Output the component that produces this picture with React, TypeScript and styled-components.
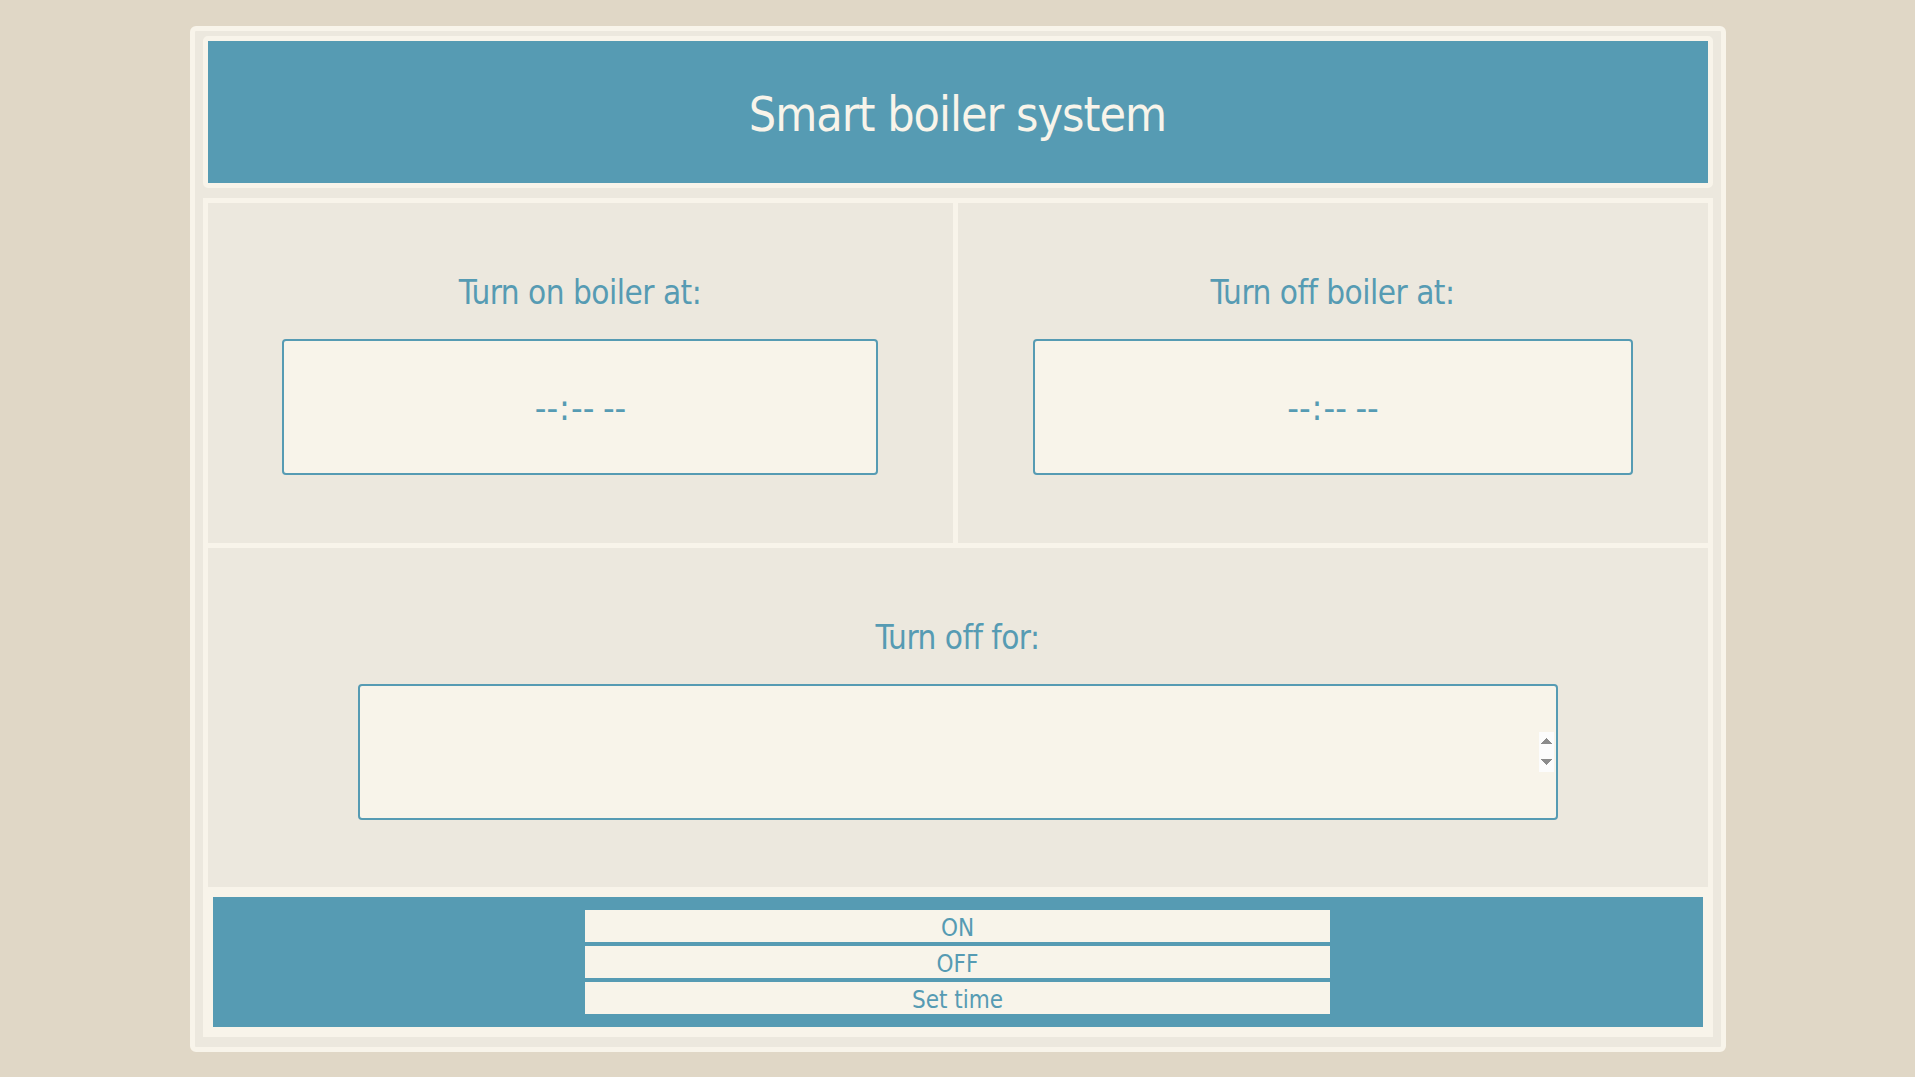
import React, {useState} from 'react';
import styled, {createGlobalStyle} from 'styled-components';

const BLUE = '#569bb3';
const LIGHT = '#f8f4ea';
const PANEL = '#ece8de';
const PAGE = '#e0d7c6';
const FONT = `"DejaVu Sans Condensed", "DejaVu Sans", Tahoma, sans-serif`;

const GlobalStyle = createGlobalStyle`
	html, body {
		margin: 0;
		padding: 0;
		background-color: ${PAGE};
		font-family: ${FONT};
	}
`;

const Frame = styled.div`
	width: 1536px;
	box-sizing: border-box;
	margin: 26px auto 0;
	padding: 5px 8px 10px;
	border: 5px solid ${LIGHT};
	border-radius: 6px;
	background-color: ${PANEL};
	display: flex;
	flex-direction: column;
	gap: 10px;
`;

const Header = styled.header`
	height: 152px;
	box-sizing: border-box;
	border: 5px solid ${LIGHT};
	border-radius: 5px;
	background-color: ${BLUE};
	display: flex;
	align-items: center;
	justify-content: center;
`;

const Title = styled.h1`
	margin: 3px 0 0;
	font-weight: normal;
	font-size: 48px;
	letter-spacing: -1px;
	color: ${LIGHT};
`;

const Board = styled.main`
	background-color: ${LIGHT};
	padding: 5px;
	display: grid;
	grid-template-columns: 745fr 750fr;
	gap: 5px;
`;

const Cell = styled.section<{ $wide?: boolean }>`
	grid-column: ${({$wide}) => ($wide ? '1 / span 2' : 'auto')};
	height: ${({$wide}) => ($wide ? '339px' : '340px')};
	box-sizing: border-box;
	padding-top: 71px;
	background-color: ${PANEL};
	display: flex;
	flex-direction: column;
	align-items: center;
`;

const Label = styled.label`
	display: block;
	height: 38px;
	line-height: 38px;
	margin-bottom: 27px;
	font-size: 33px;
	letter-spacing: -0.5px;
	color: ${BLUE};
`;

const Field = styled.input`
	width: 80%;
	height: 136px;
	box-sizing: border-box;
	border: 2px solid ${BLUE};
	border-radius: 4px;
	background-color: ${LIGHT};
	color: ${BLUE};
	font-family: ${FONT};
	font-size: 36px;
	text-align: center;
	outline: none;

	&::-webkit-calendar-picker-indicator {
		display: none;
	}

	&::-webkit-datetime-edit {
		justify-content: center;
	}

	&::-webkit-inner-spin-button {
		opacity: 1;
	}
`;

const Controls = styled.footer`
	grid-column: 1 / span 2;
	border: 5px solid ${LIGHT};
	border-radius: 5px;
	background-color: ${BLUE};
	padding: 13px 0;
	display: flex;
	flex-direction: column;
	align-items: center;
	gap: 4px;
`;

const Button = styled.button`
	width: 50%;
	height: 32px;
	border: none;
	padding: 3px 0 0;
	background-color: ${LIGHT};
	color: ${BLUE};
	font-family: ${FONT};
	font-size: 24px;
	cursor: pointer;
`;

export default function App() {
	const [onAt, setOnAt] = useState('');
	const [offAt, setOffAt] = useState('');
	const [offFor, setOffFor] = useState('');

	return (
		<>
			<GlobalStyle/>
			<Frame>
				<Header>
					<Title>Smart boiler system</Title>
				</Header>
				<Board>
					<Cell>
						<Label htmlFor="on-at">Turn on boiler at:</Label>
						<Field id="on-at" type="time" value={onAt} onChange={e => setOnAt(e.target.value)}/>
					</Cell>
					<Cell>
						<Label htmlFor="off-at">Turn off boiler at:</Label>
						<Field id="off-at" type="time" value={offAt} onChange={e => setOffAt(e.target.value)}/>
					</Cell>
					<Cell $wide>
						<Label htmlFor="off-for">Turn off for:</Label>
						<Field id="off-for" type="number" value={offFor} onChange={e => setOffFor(e.target.value)}/>
					</Cell>
					<Controls>
						<Button>ON</Button>
						<Button>OFF</Button>
						<Button>Set time</Button>
					</Controls>
				</Board>
			</Frame>
		</>
	);
}
